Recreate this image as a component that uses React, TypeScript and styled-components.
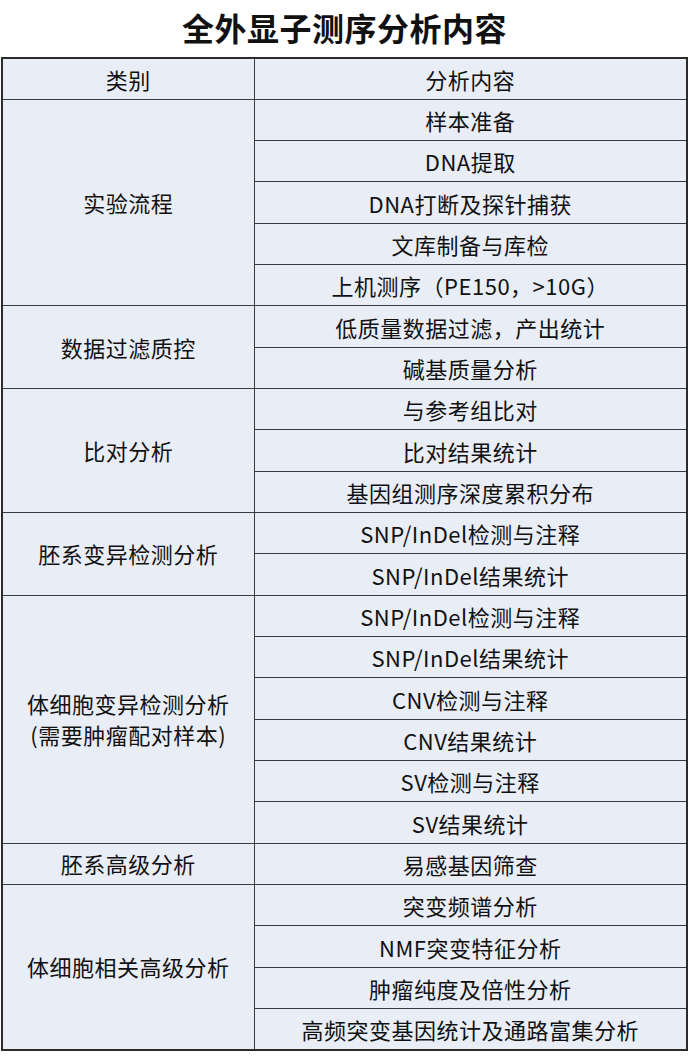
import React from "react";
import styled, { createGlobalStyle } from "styled-components";

const GlobalStyle = createGlobalStyle`
  html, body {
    margin: 0;
    padding: 0;
    background: #ffffff;
  }
  body {
    font-family: "Noto Sans CJK SC", "Noto Sans", sans-serif;
    color: #111111;
  }
`;

interface IGroup {
  category: string[];
  items: string[];
}

const groups: IGroup[] = [
  {
    category: ["实验流程"],
    items: ["样本准备", "DNA提取", "DNA打断及探针捕获", "文库制备与库检", "上机测序（PE150，>10G）"],
  },
  { category: ["数据过滤质控"], items: ["低质量数据过滤，产出统计", "碱基质量分析"] },
  { category: ["比对分析"], items: ["与参考组比对", "比对结果统计", "基因组测序深度累积分布"] },
  { category: ["胚系变异检测分析"], items: ["SNP/InDel检测与注释", "SNP/InDel结果统计"] },
  {
    category: ["体细胞变异检测分析", "(需要肿瘤配对样本)"],
    items: [
      "SNP/InDel检测与注释",
      "SNP/InDel结果统计",
      "CNV检测与注释",
      "CNV结果统计",
      "SV检测与注释",
      "SV结果统计",
    ],
  },
  { category: ["胚系高级分析"], items: ["易感基因筛查"] },
  {
    category: ["体细胞相关高级分析"],
    items: ["突变频谱分析", "NMF突变特征分析", "肿瘤纯度及倍性分析", "高频突变基因统计及通路富集分析"],
  },
];

export default function App() {
  return (
    <>
      <GlobalStyle />
      <Page>
        <Title>全外显子测序分析内容</Title>
        <Table>
          <colgroup>
            <col style={{ width: 252 }} />
            <col />
          </colgroup>
          <thead>
            <Row>
              <HeadCell>类别</HeadCell>
              <HeadCell>分析内容</HeadCell>
            </Row>
          </thead>
          <tbody>
            {groups.map((g, gi) =>
              g.items.map((item, i) => (
                <Row key={`${gi}-${i}`}>
                  {i === 0 && (
                    <CategoryCell rowSpan={g.items.length}>
                      {g.category.map((line, li) => (
                        <div key={li}>{line}</div>
                      ))}
                    </CategoryCell>
                  )}
                  <Cell>{item}</Cell>
                </Row>
              ))
            )}
          </tbody>
        </Table>
      </Page>
    </>
  );
}

const Page = styled.div`
  width: 690px;
  padding: 0 2px 0 1px;
  box-sizing: border-box;
`;

const Title = styled.h1`
  margin: 0;
  height: 57px;
  display: flex;
  align-items: center;
  justify-content: center;
  font-size: 32px;
  font-weight: 700;
  letter-spacing: 0.5px;
  padding-bottom: 4px;
  box-sizing: border-box;
  color: #111111;
`;

const Table = styled.table`
  width: 100%;
  border-collapse: collapse;
  table-layout: fixed;
  background: #e9edf6;
  border: 2px solid #2b2b2b;
`;

const Row = styled.tr`
  height: 41.33px;
`;

const Cell = styled.td`
  border: 1.5px solid #3a3a3a;
  padding: 0;
  text-align: center;
  vertical-align: middle;
  font-size: 22px;
  font-weight: 400;
  letter-spacing: 0.5px;
  line-height: 26px;
  color: #111111;
`;

const HeadCell = styled(Cell).attrs({ as: "th" })`
  font-weight: 400;
`;

const CategoryCell = styled(Cell)`
  line-height: 31px;
`;
